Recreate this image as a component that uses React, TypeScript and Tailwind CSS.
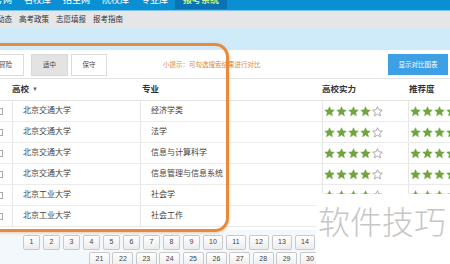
import React from 'react';

const font = "font-['Liberation_Sans','Noto_Sans_CJK_SC',sans-serif]";

const Star = ({ filled }: { filled: boolean }) => (
  <svg width="11" height="11" viewBox="0 0 24 24" className="shrink-0">
    <polygon
      points="12,1.5 15.1,8.3 22.5,9.1 16.9,14.1 18.5,21.5 12,17.7 5.5,21.5 7.1,14.1 1.5,9.1 8.9,8.3"
      fill={filled ? '#6fa43e' : 'none'}
      stroke={filled ? '#6fa43e' : '#8f8f8f'}
      strokeWidth={filled ? 1 : 1.6}
      strokeLinejoin="round"
    />
  </svg>
);

const Stars = ({ n }: { n: number }) => (
  <div className="flex gap-px">
    {[0, 1, 2, 3, 4].map((i) => (
      <Star key={i} filled={i < n} />
    ))}
  </div>
);

const App: React.FC = () => {
  const navItems = ['高考网', '名校库', '招生网', '院校库', '专业库'];
  const subNav = ['招生动态', '高考政策', '志愿填报', '报考指南'];

  const rows = [
    { school: '北京交通大学', major: '经济学类' },
    { school: '北京交通大学', major: '法学' },
    { school: '北京交通大学', major: '信息与计算科学' },
    { school: '北京交通大学', major: '信息管理与信息系统' },
    { school: '北京工业大学', major: '社会学' },
    { school: '北京工业大学', major: '社会工作' },
  ];

  // pages hidden under the watermark are left out
  const pageRow1 = Array.from({ length: 14 }, (_, i) => i + 1);
  const pageRow2 = Array.from({ length: 10 }, (_, i) => i + 21);

  const cols = 'grid grid-cols-[25px_128px_182px_86px_86px] -ml-[13px]';

  return (
    <div className={`relative w-[450px] h-[264px] overflow-hidden bg-[#f3f8fc] ${font}`}>
      {/* top nav */}
      <div className="h-[10px] bg-[#0b8fd3] overflow-hidden">
        <div className="-mt-[8px] h-[17px] flex items-center text-[9px] text-white -ml-[15px]">
          {navItems.map((t) => (
            <span key={t} className="mr-[12px] whitespace-nowrap">
              {t}
            </span>
          ))}
          <span className="-ml-[5px] h-full flex items-center px-[8px] bg-[#0b72b3] text-[#c6f08a] font-bold">
            报考系统
          </span>
        </div>
      </div>
      <div className="h-px bg-[#79c5ee]" />

      {/* sub nav */}
      <div className="h-[17px] bg-[#e6e6e6] flex items-center text-[7.5px] text-[#333] -ml-[18px] gap-[7px]">
        {subNav.map((t) => (
          <span key={t} className="whitespace-nowrap">
            {t}
          </span>
        ))}
      </div>

      <div className="h-[22px] bg-[#cfeaf9]" />

      {/* panel */}
      <div className="bg-white h-[180px]">
        <div className="h-[28px] flex items-start pt-[4px] text-[6.5px] text-[#444]">
          <div className="-ml-[13px] w-[37px] h-[22px] border border-[#dcdcdc] bg-white flex items-center justify-center">
            冒险
          </div>
          <div className="ml-[7px] w-[37px] h-[22px] border border-[#d8d8d8] bg-[#e3e3e3] flex items-center justify-center">
            适中
          </div>
          <div className="ml-[3px] w-[36px] h-[22px] border border-[#dcdcdc] bg-white flex items-center justify-center">
            保守
          </div>
          <div className="ml-[56px] h-[22px] flex items-center text-[#d98a3a] whitespace-nowrap">
            小提示：可勾选搜索结果进行对比
          </div>
          <div className="ml-auto mr-[2px] w-[60px] h-[21px] bg-[#3d9fe4] text-white flex items-center justify-center">
            显示对比图表
          </div>
        </div>

        {/* header */}
        <div className={`${cols} h-[23px] border-y border-[#e3e3e3] items-center text-[8.5px] font-bold text-[#333]`}>
          <div />
          <div className="flex items-center gap-[3px]">
            高校
            <span className="text-[6px] text-[#666]">▼</span>
          </div>
          <div className="pl-[2px]">专业</div>
          <div>高校实力</div>
          <div className="pl-[1px]">推荐度</div>
        </div>

        {rows.map((r, i) => (
          <div key={i} className={`${cols} h-[21px] border-b border-[#ebebeb] text-[8px] text-[#444]`}>
            <div className="flex items-center justify-center">
              <div className="w-[7px] h-[7px] border border-[#aaa] bg-white" />
            </div>
            <div className="border-l border-[#e6e6e6] pl-[10px] flex items-center">{r.school}</div>
            <div className="border-l border-[#e6e6e6] pl-[10px] flex items-center">{r.major}</div>
            <div className="border-l border-[#e6e6e6] pl-[1px] flex items-center">
              <Stars n={4} />
            </div>
            <div className="border-l border-[#e6e6e6] pl-[1px] flex items-center">
              <Stars n={4} />
            </div>
          </div>
        ))}
      </div>

      {/* pagination */}
      <div className="pt-[5px] flex flex-col gap-[2px] text-[7px] text-[#444]">
        <div className="flex gap-[3px] pl-[23px]">
          {pageRow1.map((p) => (
            <div
              key={p}
              className={`${p < 10 ? 'w-[17px]' : 'w-[20px]'} h-[15px] shrink-0 border border-[#c9c9c9] rounded-[2px] bg-gradient-to-b from-white to-[#ececec] flex items-center justify-center`}
            >
              {p}
            </div>
          ))}
        </div>
        <div className="flex gap-[2.4px] pl-[89px]">
          {pageRow2.map((p) => (
            <div
              key={p}
              className="w-[21px] h-[15px] shrink-0 border border-[#c9c9c9] rounded-[2px] bg-gradient-to-b from-white to-[#ececec] flex items-center justify-center"
            >
              {p}
            </div>
          ))}
        </div>
      </div>

      {/* highlight frame */}
      <div className="absolute left-[-20px] top-[43px] w-[249px] h-[189px] border-[3px] border-[#e8893c] rounded-[14px] shadow-[0_1px_3px_rgba(200,110,40,0.35)] pointer-events-none" />

      {/* watermark */}
      <div className="absolute left-[316px] top-[194px] w-[134px] h-[70px] bg-white pl-[2px] pt-[13px] text-[32px] leading-none text-[#c6c6c6] font-light whitespace-nowrap">
        软件技巧
      </div>
    </div>
  );
};

export default App;
